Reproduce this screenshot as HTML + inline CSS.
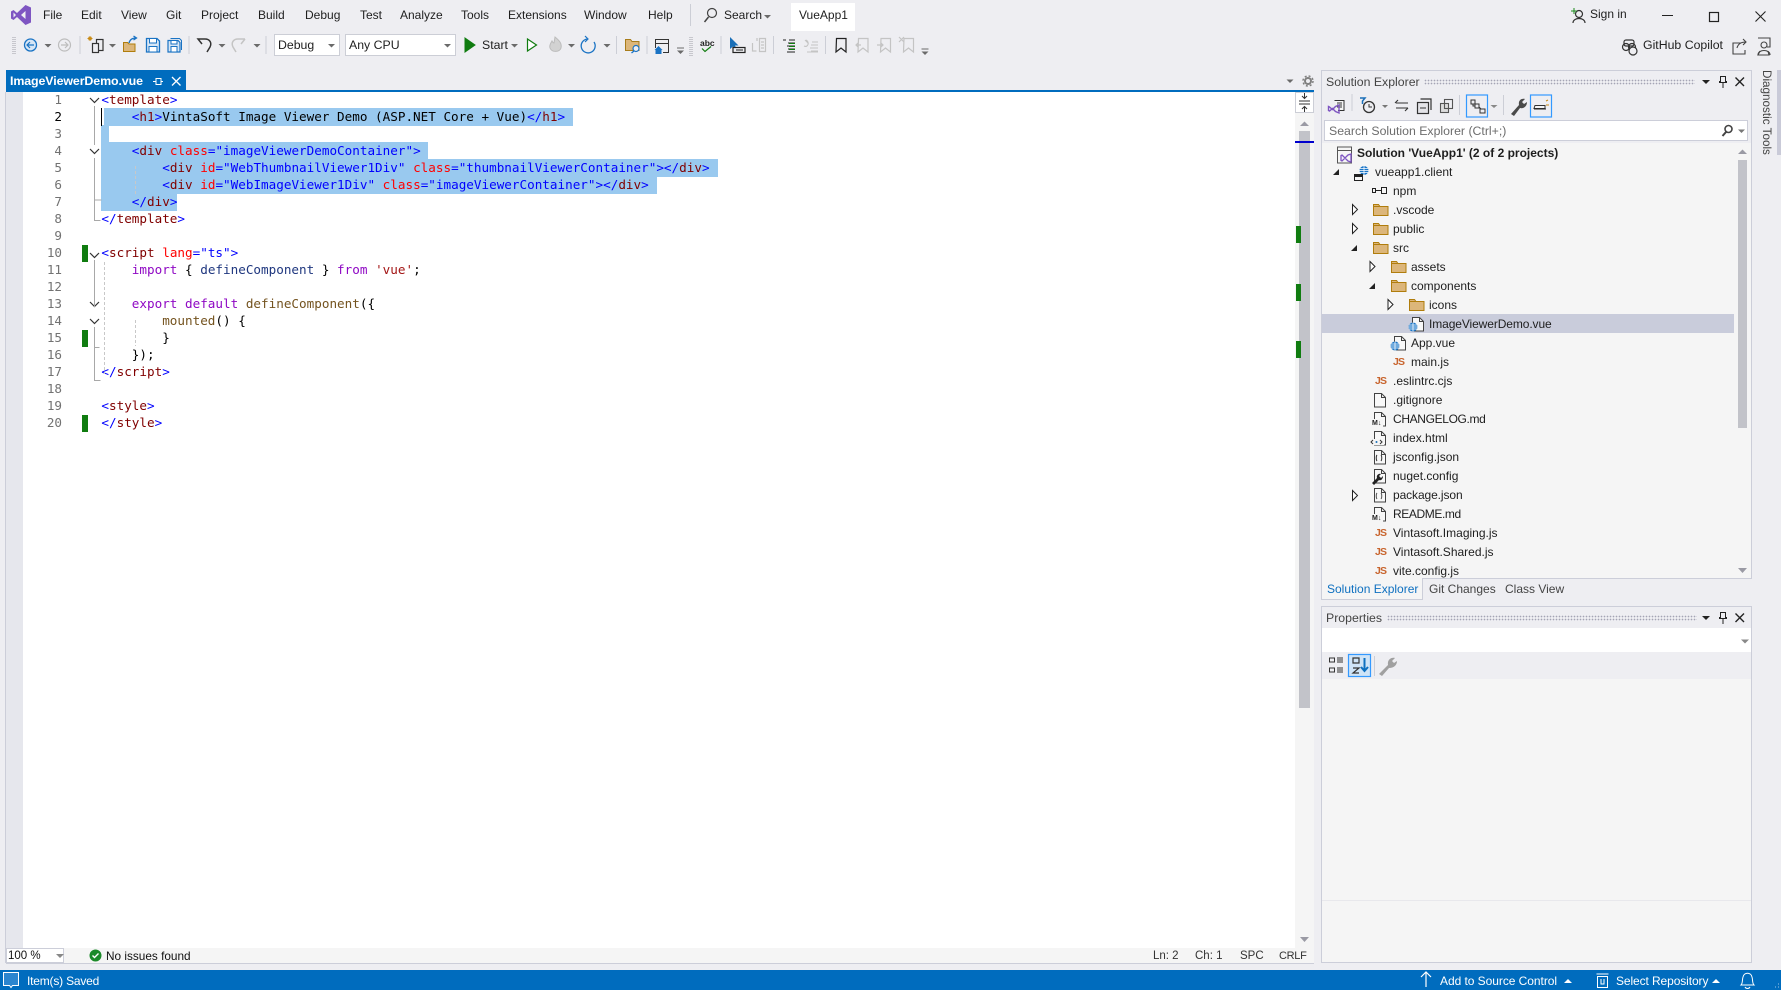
<!DOCTYPE html>
<html lang="en"><head><meta charset="utf-8"><title>VueApp1</title>
<style>
html,body{margin:0;padding:0;width:1781px;height:990px;overflow:hidden;background:#eeeef2}
body{position:relative;font-family:"Liberation Sans",sans-serif;font-size:12.3px;color:#1e1e1e}
.a{position:absolute}
.t{position:absolute;white-space:nowrap;line-height:16px}
.m{top:7px;font-size:12px}
.b{top:37px}
.r{position:absolute;white-space:nowrap;height:19px;line-height:19px;font-size:12px;color:#1e1e1e;margin-top:1px}
.c{position:absolute;left:101.4px;white-space:pre;height:17px;line-height:17px;font-family:"DejaVu Sans Mono","Liberation Mono",monospace;font-size:12.64px;color:#000;margin-top:-1px}
.n{position:absolute;width:30px;left:32px;text-align:right;height:17px;line-height:17px;font-family:"DejaVu Sans Mono","Liberation Mono",monospace;font-size:12.62px;color:#727272;margin-top:-1px}
.s{position:absolute;background:#99c9ef;height:18px}
.g{color:#0000ff}.h{color:#800000}.q{color:#ff0000}.p{color:#8f08c4}.v{color:#1f377f}.f{color:#74531f}.k{color:#a31515}
.dots{position:absolute;height:6px;background-image:radial-gradient(#a4a4b4 .7px,transparent .9px);background-size:3px 3px}
.js{position:absolute;font-size:10.5px;font-weight:bold;letter-spacing:-.8px;color:#c8642d;line-height:19px;height:19px;margin-top:1px}
.md{position:absolute;font-size:7px;font-weight:bold;color:#222;line-height:8px;z-index:2}
.st{position:absolute;color:#fff;white-space:nowrap;line-height:20px;top:971px;font-size:12px}
.bt{position:absolute;white-space:nowrap;top:949px;height:15px;line-height:15px;font-size:11.5px;color:#333}
</style></head><body>

<!-- panels -->
<div class="a" style="left:791px;top:3px;width:64px;height:28px;background:#fff"></div>
<div class="a" style="left:274px;top:34px;width:64px;height:20px;background:#fff;border:1px solid #ccced6"></div>
<div class="a" style="left:345px;top:34px;width:109px;height:20px;background:#fff;border:1px solid #ccced6"></div>

<!-- editor -->
<div class="a" style="left:6px;top:70px;width:180px;height:20px;background:#006cbe"></div>
<div class="a" style="left:6px;top:90px;width:1308px;height:2px;background:#006cbe"></div>
<div class="a" style="left:5px;top:92px;width:1309px;height:871px;background:#fff;border-left:1px solid #ccced9;box-sizing:border-box"></div>
<div class="a" style="left:6px;top:92px;width:17px;height:856px;background:#e6e7ed"></div>
<div class="a" style="left:1295px;top:92px;width:19px;height:856px;background:#f5f5f5"></div>
<div class="a" style="left:1295px;top:92px;width:19px;height:21px;background:#fff;border:1px solid #ccced6;box-sizing:border-box"></div>
<div class="a" style="left:1299px;top:131px;width:11px;height:577px;background:#c2c3c9"></div>
<div class="a" style="left:1296px;top:226px;width:5px;height:17px;background:#107c10"></div>
<div class="a" style="left:1296px;top:284px;width:5px;height:17px;background:#107c10"></div>
<div class="a" style="left:1296px;top:341px;width:5px;height:17px;background:#107c10"></div>
<div class="a" style="left:1295px;top:141px;width:19px;height:2px;background:#0000cd"></div>
<div class="a" style="left:6px;top:948px;width:1308px;height:15px;background:#f5f5f5;border-bottom:1px solid #ccced9"></div>
<div class="a" style="left:6px;top:948px;width:58px;height:15px;background:#fff;border:1px solid #ccced9;box-sizing:border-box"></div>

<!-- selection -->
<div class="s" style="left:104px;top:108px;width:469px"></div>
<div class="s" style="left:101px;top:125px;width:8px"></div>
<div class="s" style="left:101px;top:142px;width:327px"></div>
<div class="s" style="left:101px;top:159px;width:617px"></div>
<div class="s" style="left:101px;top:176px;width:556px"></div>
<div class="s" style="left:101px;top:193px;width:76px"></div>
<div class="a" style="left:101px;top:108px;width:1px;height:18px;background:#000"></div>

<!-- line numbers -->
<div class="n" style="top:91.5px">1</div><div class="n" style="top:108.5px;color:#000">2</div><div class="n" style="top:125.5px">3</div><div class="n" style="top:142.5px">4</div><div class="n" style="top:159.5px">5</div><div class="n" style="top:176.5px">6</div><div class="n" style="top:193.5px">7</div><div class="n" style="top:210.5px">8</div><div class="n" style="top:227.5px">9</div><div class="n" style="top:244.5px">10</div><div class="n" style="top:261.5px">11</div><div class="n" style="top:278.5px">12</div><div class="n" style="top:295.5px">13</div><div class="n" style="top:312.5px">14</div><div class="n" style="top:329.5px">15</div><div class="n" style="top:346.5px">16</div><div class="n" style="top:363.5px">17</div><div class="n" style="top:380.5px">18</div><div class="n" style="top:397.5px">19</div><div class="n" style="top:414.5px">20</div>

<!-- code -->
<div class="c" style="top:91.5px"><span class="g">&lt;</span><span class="h">template</span><span class="g">&gt;</span></div>
<div class="c" style="top:108.5px">    <span class="g">&lt;</span><span class="h">h1</span><span class="g">&gt;</span>VintaSoft Image Viewer Demo (ASP.NET Core + Vue)<span class="g">&lt;/</span><span class="h">h1</span><span class="g">&gt;</span></div>
<div class="c" style="top:142.5px">    <span class="g">&lt;</span><span class="h">div</span> <span class="q">class</span><span class="g">="imageViewerDemoContainer"&gt;</span></div>
<div class="c" style="top:159.5px">        <span class="g">&lt;</span><span class="h">div</span> <span class="q">id</span><span class="g">="WebThumbnailViewer1Div"</span> <span class="q">class</span><span class="g">="thumbnailViewerContainer"&gt;&lt;/</span><span class="h">div</span><span class="g">&gt;</span></div>
<div class="c" style="top:176.5px">        <span class="g">&lt;</span><span class="h">div</span> <span class="q">id</span><span class="g">="WebImageViewer1Div"</span> <span class="q">class</span><span class="g">="imageViewerContainer"&gt;&lt;/</span><span class="h">div</span><span class="g">&gt;</span></div>
<div class="c" style="top:193.5px">    <span class="g">&lt;/</span><span class="h">div</span><span class="g">&gt;</span></div>
<div class="c" style="top:210.5px"><span class="g">&lt;/</span><span class="h">template</span><span class="g">&gt;</span></div>
<div class="c" style="top:244.5px"><span class="g">&lt;</span><span class="h">script</span> <span class="q">lang</span><span class="g">="ts"&gt;</span></div>
<div class="c" style="top:261.5px">    <span class="p">import</span> { <span class="v">defineComponent</span> } <span class="p">from</span> <span class="k">'vue'</span>;</div>
<div class="c" style="top:295.5px">    <span class="p">export default</span> <span class="f">defineComponent</span>({</div>
<div class="c" style="top:312.5px">        <span class="f">mounted</span>() {</div>
<div class="c" style="top:329.5px">        }</div>
<div class="c" style="top:346.5px">    });</div>
<div class="c" style="top:363.5px"><span class="g">&lt;/</span><span class="h">script</span><span class="g">&gt;</span></div>
<div class="c" style="top:397.5px"><span class="g">&lt;</span><span class="h">style</span><span class="g">&gt;</span></div>
<div class="c" style="top:414.5px"><span class="g">&lt;/</span><span class="h">style</span><span class="g">&gt;</span></div>

<!-- solution explorer panel -->
<div class="a" style="left:1321px;top:70px;width:431px;height:509px;background:#f5f5f5;border:1px solid #ccced9;box-sizing:border-box"></div>
<div class="a" style="left:1322px;top:71px;width:429px;height:72px;background:#eeeef2"></div>
<div class="a" style="left:1324px;top:120px;width:424px;height:21px;background:#fff;border:1px solid #ccced9;box-sizing:border-box"></div>
<div class="a" style="left:1322px;top:314px;width:412px;height:19px;background:#c9ccdb"></div>
<div class="a" style="left:1738px;top:160px;width:9px;height:268px;background:#c2c3c9"></div>
<div class="dots" style="left:1424px;top:79px;width:271px"></div>
<div class="t" style="left:1326px;top:74px;color:#444">Solution Explorer</div>
<div class="t" style="left:1329px;top:123px;color:#6d6d6d">Search Solution Explorer (Ctrl+;)</div>

<!-- tabs -->
<div class="a" style="left:1321px;top:578px;width:102px;height:22px;background:#f5f5f5;border:1px solid #ccced9;border-top:none;box-sizing:border-box"></div>
<div class="t" style="left:1327px;top:581px;color:#0e70c0;font-size:12px">Solution Explorer</div>
<div class="t" style="left:1429px;top:581px;color:#444;font-size:12px">Git Changes</div>
<div class="t" style="left:1505px;top:581px;color:#444;font-size:12px">Class View</div>

<!-- properties -->
<div class="a" style="left:1321px;top:606px;width:431px;height:357px;background:#f5f5f5;border:1px solid #ccced9;box-sizing:border-box"></div>
<div class="a" style="left:1322px;top:607px;width:429px;height:21px;background:#eeeef2"></div>
<div class="a" style="left:1322px;top:628px;width:429px;height:24px;background:#fff"></div>
<div class="a" style="left:1322px;top:652px;width:429px;height:27px;background:#eeeef2"></div>
<div class="a" style="left:1322px;top:900px;width:429px;height:1px;background:#e8e8ec"></div>
<div class="dots" style="left:1387px;top:615px;width:310px"></div>
<div class="t" style="left:1326px;top:610px;color:#444">Properties</div>

<!-- status bar -->
<div class="a" style="left:0;top:970px;width:1781px;height:20px;background:#006cbe"></div>
<div class="st" style="left:27px;letter-spacing:-.2px">Item(s) Saved</div>
<div class="st" style="left:1440px;letter-spacing:-.05px">Add to Source Control</div>
<div class="st" style="left:1616px;letter-spacing:-.1px">Select Repository</div>

<!-- menu -->
<div class="t m" style="left:43px">File</div><div class="t m" style="left:81px">Edit</div><div class="t m" style="left:121px">View</div><div class="t m" style="left:166px">Git</div><div class="t m" style="left:201px">Project</div><div class="t m" style="left:258px">Build</div><div class="t m" style="left:305px">Debug</div><div class="t m" style="left:360px">Test</div><div class="t m" style="left:400px">Analyze</div><div class="t m" style="left:461px">Tools</div><div class="t m" style="left:508px">Extensions</div><div class="t m" style="left:584px">Window</div><div class="t m" style="left:648px">Help</div><div class="t m" style="left:724px">Search</div><div class="t m" style="left:799px">VueApp1</div><div class="t m" style="left:1590px;top:6px">Sign in</div>

<!-- toolbar text -->
<div class="t b" style="left:278px">Debug</div><div class="t b" style="left:349px">Any CPU</div><div class="t b" style="left:482px">Start</div><div class="t b" style="left:1643px">GitHub Copilot</div>

<div class="t" style="left:10px;top:73px;color:#fff;font-weight:bold;font-size:12.4px;letter-spacing:-.1px">ImageViewerDemo.vue</div>
<div class="bt" style="left:8px;color:#111">100 %</div>
<div class="bt" style="left:106px;color:#111;font-size:11.8px">No issues found</div>
<div class="bt" style="left:1153px">Ln: 2</div>
<div class="bt" style="left:1195px">Ch: 1</div>
<div class="bt" style="left:1240px">SPC</div>
<div class="bt" style="left:1279px;font-size:11px;letter-spacing:-.3px">CRLF</div>
<div class="t" style="left:1758px;top:70px;writing-mode:vertical-rl;color:#444;line-height:16px;font-size:11.7px">Diagnostic Tools</div>
<div class="a" style="left:1777px;top:70px;width:4px;height:85px;background:#c9cad8"></div>

<!-- tree text -->
<div class="r" style="top:143px;left:1357px;font-weight:bold">Solution 'VueApp1' (2 of 2 projects)</div>
<div class="r" style="top:162px;left:1375px">vueapp1.client</div>
<div class="r" style="top:181px;left:1393px">npm</div>
<div class="r" style="top:200px;left:1393px">.vscode</div>
<div class="r" style="top:219px;left:1393px">public</div>
<div class="r" style="top:238px;left:1393px">src</div>
<div class="r" style="top:257px;left:1411px">assets</div>
<div class="r" style="top:276px;left:1411px">components</div>
<div class="r" style="top:295px;left:1429px">icons</div>
<div class="r" style="top:314px;left:1429px;letter-spacing:-.1px">ImageViewerDemo.vue</div>
<div class="r" style="top:333px;left:1411px">App.vue</div>
<div class="r" style="top:352px;left:1411px">main.js</div>
<div class="r" style="top:371px;left:1393px">.eslintrc.cjs</div>
<div class="r" style="top:390px;left:1393px">.gitignore</div>
<div class="r" style="top:409px;left:1393px;letter-spacing:-.35px">CHANGELOG.md</div>
<div class="r" style="top:428px;left:1393px">index.html</div>
<div class="r" style="top:447px;left:1393px">jsconfig.json</div>
<div class="r" style="top:466px;left:1393px">nuget.config</div>
<div class="r" style="top:485px;left:1393px;letter-spacing:-.1px">package.json</div>
<div class="r" style="top:504px;left:1393px;letter-spacing:-.4px">README.md</div>
<div class="r" style="top:523px;left:1393px">Vintasoft.Imaging.js</div>
<div class="r" style="top:542px;left:1393px">Vintasoft.Shared.js</div>
<div class="r" style="top:561px;left:1393px">vite.config.js</div>
<div class="js" style="left:1393px;top:352px">JS</div>
<div class="js" style="left:1375px;top:371px">JS</div>
<div class="js" style="left:1375px;top:523px">JS</div>
<div class="js" style="left:1375px;top:542px">JS</div>
<div class="js" style="left:1375px;top:561px">JS</div>
<div class="md" style="left:1372px;top:420px">M↓</div>
<div class="md" style="left:1372px;top:515px">M↓</div>

<!-- icons -->
<svg class="a" style="left:0;top:0" width="1781" height="990" viewBox="0 0 1781 990" fill="none">
<defs>
<g id="car"><path d="M0 0h7l-3.500 3.500z" fill="#6a6a6a"/></g>
<g id="fold"><path d="M.5 2.500h5l1.500 2h8v9H.5z" fill="#dcb67a" stroke="#b07d0c"/><path d="M1 4.500h5.500" stroke="#b07d0c"/></g>
<g id="hol"><path d="M.5 0v10l5-5z" fill="#fff" stroke="#222"/></g>
<g id="sol"><path d="M6 0v6h-6z" fill="#222"/></g>
<g id="doc"><path d="M.5.500h7l4 4v9.500H.5z" fill="#f8f8f8" stroke="#424242"/><path d="M7.500.500v4h4" stroke="#424242"/></g>
<g id="globe"><circle cx="5" cy="5" r="4.500" fill="#1a76c8"/><path d="M.5 5h9M5 .5v9M1 3h8M1 7h8" stroke="#fff" stroke-width=".8"/></g>
<g id="chev"><path d="M0 0l4.500 4.500L9 0" stroke="#333" stroke-width="1.200"/></g>
</defs>

<!-- logo -->
<path fill-rule="evenodd" d="M25.500 5 31 7.500v15L25.500 25 17 17l-3.500 3L11 18.500v-7L13.500 10l3.500 3zm0 6-4.500 4 4.500 4zm-12 1.500v5L16 15z" fill="#7e55c2"/>
<path d="M690.500 4v22" stroke="#ccced6"/>
<circle cx="712" cy="13" r="4.500" stroke="#424242" stroke-width="1.200"/><path d="M708.500 17l-4 5" stroke="#424242" stroke-width="1.500"/>
<use href="#car" x="764" y="15"/>

<!-- window controls -->
<path d="M1662 15.500h11" stroke="#222"/><rect x="1709.500" y="12.500" width="9" height="9" stroke="#222" stroke-width="1.200"/><path d="M1755.500 11.500l10 10m0-10l-10 10" stroke="#222" stroke-width="1.100"/>
<circle cx="1579" cy="14" r="3.500" stroke="#333" stroke-width="1.200"/><path d="M1573 23c0-6 12-6 12 0" stroke="#333" stroke-width="1.200"/><path d="M1574 8v6M1571 11h6" stroke="#1c8a1c"/>

<!-- toolbar grip -->
<path d="M13 37v17M15 37v17" stroke="#a0a0a8" stroke-dasharray="1 1"/>
<path d="M690 41v19M692 41v19" stroke="#a0a0a8" stroke-dasharray="1 1" transform="translate(0,-4)"/>

<!-- nav -->
<circle cx="30.500" cy="45" r="6" stroke="#1a73c4" stroke-width="1.300" fill="#d7e6f5"/><path d="M34 45h-7m3-3-3 3 3 3" stroke="#1a73c4" stroke-width="1.200"/>
<use href="#car" x="44.500" y="44"/>
<circle cx="64.500" cy="45" r="6" stroke="#bdbdbd" stroke-width="1.200"/><path d="M61 45h7m-3-3 3 3-3 3" stroke="#bdbdbd" stroke-width="1.200"/>
<path d="M80 36v18" stroke="#ccced6"/>
<!-- new -->
<path d="M90 36v5M87.500 38.500h5M88.500 37l3 3m0-3-3 3" stroke="#c88a15"/>
<rect x="96.500" y="39.500" width="6.500" height="11" stroke="#333" stroke-width="1.200"/><rect x="92.500" y="43.500" width="6" height="9" stroke="#333" stroke-width="1.200" fill="#eeeef2"/>
<use href="#car" x="109" y="44"/>
<!-- open -->
<path d="M123.500 51.500v-9h4l1.500 1.500h6v7.500z" fill="#dcb67a" stroke="#b07d0c"/><path d="M129 43c1-4 4-5 7-5m-2.500-2 3 2-3 2" stroke="#1a73c4" stroke-width="1.300"/>
<!-- save -->
<path d="M146.500 38.500h10.500l2.500 2.500v11h-13z" fill="#d7e6f5" stroke="#1a73c4" stroke-width="1.300"/><rect x="149.500" y="38.500" width="7" height="4.500" fill="#fff" stroke="#1a73c4"/><rect x="149" y="46.500" width="8" height="5.500" fill="#fff" stroke="#1a73c4"/>
<path d="M170.500 38.500h9l2 2v9.500" stroke="#1a73c4"/><path d="M168 40.500h10l2 2v9.500h-12z" fill="#d7e6f5" stroke="#1a73c4" stroke-width="1.200"/><rect x="171" y="46.500" width="6" height="5.500" fill="#fff" stroke="#1a73c4"/><rect x="171" y="40.500" width="6" height="3.500" fill="#fff" stroke="#1a73c4"/>
<path d="M189 36v18" stroke="#ccced6"/>
<!-- undo -->
<path d="M199 39l-1 0 4 5m-4-5h7c5 0 7 4 5 8l-3 5" stroke="#333" stroke-width="1.500"/>
<use href="#car" x="218.500" y="44"/>
<path d="M245 39l-4 5m4-5h-7c-5 0-7 4-5 8l3 5" stroke="#c4c4c4" stroke-width="1.500"/>
<use href="#car" x="253.500" y="44"/>
<path d="M266 36v18" stroke="#ccced6"/>
<use href="#car" x="328" y="44"/><use href="#car" x="444" y="44"/>
<!-- start -->
<path d="M465 38l10 7-10 7z" fill="#107c10" stroke="#107c10"/>
<use href="#car" x="511" y="44"/>
<path d="M527.500 39l9 6-9 6z" stroke="#107c10" stroke-width="1.200" fill="#fff"/>
<path d="M555 37c5 4 7 7 6 11-1 4-9 5-11 0-1-3 1-5 2-7 1 2 2 2 2 2z" fill="#d2d2d2" stroke="#bcbcbc"/>
<use href="#car" x="568" y="44"/>
<path d="M587 39a7 7 0 1 0 7 3" stroke="#1a73c4" stroke-width="1.300"/><path d="M585 36l3 3-3 3" stroke="#1a73c4" stroke-width="1.200"/>
<use href="#car" x="603.500" y="44"/>
<path d="M616.500 36v18M647 36v18M721 36v18M773.500 36v18M825.500 36v18" stroke="#ccced6"/>
<!-- folder search -->
<path d="M625.500 50.500v-11h5l1.500 2h7v9z" fill="#dcb67a" stroke="#a87c1b"/><circle cx="636" cy="48.500" r="3" fill="#eeeef2" stroke="#1a73c4" stroke-width="1.200"/><path d="M634 51l-2.500 2" stroke="#1a73c4" stroke-width="1.300"/>
<!-- home window -->
<rect x="655.500" y="39.500" width="13" height="13" stroke="#333" fill="none"/><path d="M655.500 43.500h13" stroke="#333"/><rect x="654" y="48" width="9" height="6" fill="#eeeef2"/><path d="M654.500 50l4-4 4 4h-1v4h-6v-4z" fill="#1a73c4"/>
<path d="M677 48h7" stroke="#6a6a6a"/><path d="M677 50.500h7l-3.500 3.500z" fill="#6a6a6a"/>
<!-- abc -->
<path d="M702 48.500l3 3 6-5" stroke="#107c10" stroke-width="1.200"/>
<text x="700" y="46" font-family="Liberation Sans" font-size="8.500" font-weight="bold" fill="#222">abc</text>
<!-- cursor -->
<path d="M730 37v12l3-2.500 2 3.500 1.500-1-1.500-3.500h3.500z" fill="#1a6fb8"/><rect x="733" y="47.500" width="12" height="5" stroke="#222" stroke-width="1.200" fill="#eeeef2"/><path d="M736 50h7" stroke="#222"/>
<path d="M752.500 43v8h4M759.500 38.500h6v13h-6zM757 38v3M761 42h3M761 45h3M761 48h3" stroke="#c4c4c4" stroke-width="1.200"/>
<path d="M783 40h3M789 40h6M788 43h7M787 46h8M788 49h7M787 52h8" stroke="#222"/><path d="M789 43.500h6M789 46.500h6M789 49.500h6" stroke="#107c10"/>
<path d="M805 40l3 3M812 42h6M811 45h7M810 48h8M811 51h7M807 52h11M804 46c4 2 6-4 2-6" stroke="#c4c4c4" stroke-width="1.100"/>
<!-- bookmarks -->
<path d="M836.500 38.500h9.500v13.500l-5-4-5 4z" stroke="#222" stroke-width="1.200"/>
<path d="M858.500 38.500h9.500v13.500l-5-4-5 4zM861 45h-5m2-2-2 2 2 2" stroke="#c4c4c4" stroke-width="1.200"/>
<path d="M881 38.500h9.500v13.500l-5-4-5 4zM877 45h6m-2-2 2 2-2 2" stroke="#c4c4c4" stroke-width="1.200"/>
<path d="M904 38.500h9.500v13.500l-5-4-5 4zM899 37l5 5m0-5-5 5" stroke="#c4c4c4" stroke-width="1.200"/>
<path d="M921.500 49h7" stroke="#6a6a6a"/><path d="M921.500 51.500h7l-3.500 3.500z" fill="#6a6a6a"/>

<!-- copilot etc -->
<circle cx="1626" cy="47" r="3.500" stroke="#333" stroke-width="1.200"/><circle cx="1632" cy="47" r="3.500" stroke="#333" stroke-width="1.200"/><rect x="1624" y="40" width="10" height="6" rx="2" stroke="#333" stroke-width="1.200"/><circle cx="1633" cy="51" r="4" fill="#eeeef2" stroke="#333" stroke-width="1.200"/>
<path d="M1741 43h-8v11h12v-4M1737 48c1-4 4-6 9-6m-3-3 3 3-3 3" stroke="#444" stroke-width="1.100"/>
<path d="M1760 51l-2 4h11l-1-4M1758 38h12v9h-3" stroke="#444" stroke-width="1.100"/><circle cx="1764" cy="45" r="3" stroke="#444" stroke-width="1.100" fill="#eeeef2"/><path d="M1758 55c0-6 12-6 12 0" stroke="#444" stroke-width="1.100"/>

<!-- tab icons -->
<path d="M153 81.500h3m0-3v6h5v-6zM161 81.500h2" stroke="#fff"/>
<path d="M172 77l8.500 8.500m0-8.500-8.500 8.500" stroke="#fff" stroke-width="1.300"/>
<use href="#car" x="1286.500" y="79.500"/>
<circle cx="1308" cy="81" r="3" stroke="#808080" stroke-width="2"/><circle cx="1308" cy="81" r="5" stroke="#808080" stroke-dasharray="2 2" stroke-width="1.500"/>

<!-- splitter -->
<path d="M1299 101h11M1299 104h11M1304.500 93v5M1304.500 107v5M1302 96l2.500 2.500 2.500-2.500M1302 109l2.500-2.500 2.500 2.500" stroke="#333"/>
<path d="M1300 126l4.500-4.500 4.500 4.500z" fill="#9a9aa4"/><path d="M1300 937h9l-4.500 5z" fill="#9a9aa4"/>

<!-- editor margin -->
<use href="#chev" x="90" y="98"/><use href="#chev" x="90" y="149"/><use href="#chev" x="90" y="253"/><use href="#chev" x="90" y="302"/><use href="#chev" x="90" y="319"/>
<path d="M94.500 106v39M94.500 158v62.500h6M94.500 260v47M94.500 327v53.500h6M94.500 327v20.500h5M94.500 200h7" stroke="#a8a8a8"/>
<path d="M104.500 262v112M135.500 320v26M135.500 166v28" stroke="#c8c8c8" stroke-dasharray="3 2"/>
<rect x="82" y="245" width="6" height="17" fill="#107c10"/><rect x="82" y="330" width="6" height="17" fill="#107c10"/><rect x="82" y="415" width="6" height="17" fill="#107c10"/>

<!-- bottom bar -->
<path d="M56 954h8l-4 4z" fill="#888"/>
<circle cx="95.500" cy="955.500" r="6" fill="#1b8a2a"/><path d="M92.500 955.500l2 2 4-4" stroke="#fff" stroke-width="1.400"/>

<!-- SE title -->
<path d="M1702 80h8l-4 4z" fill="#222"/><path d="M1720.500 76.500h5v5h1v1h-7v-1h1zM1723 83v5" stroke="#222"/><path d="M1735.500 77.500l8.500 8.500m0-8.500-8.500 8.500" stroke="#222" stroke-width="1.400"/>
<path d="M1702 616h8l-4 4z" fill="#222"/><path d="M1720.500 612.500h5v5h1v1h-7v-1h1zM1723 619v5" stroke="#222"/><path d="M1735.500 613.500l8.500 8.500m0-8.500-8.500 8.500" stroke="#222" stroke-width="1.400"/>

<!-- SE toolbar -->
<path d="M1334.500 100.500h9.500v10h-6" stroke="#333" fill="#f5f5f5"/><path d="M1337 103h5M1337 105h5M1337 107h5" stroke="#333"/>
<path d="M1329.500 107l3 2.500 3-3 3.500-1.500v8l-3.500-1.500-3-3-3 2.500-1-.5v-4z" stroke="#7e55c2" stroke-width="1.400" fill="none"/>
<path d="M1352 94v17" stroke="#ccced6"/>
<circle cx="1369" cy="107" r="5.500" stroke="#333" stroke-width="1.300"/><path d="M1369 104v3h3" stroke="#333"/><path d="M1360 98h5l-2.500 3v3" stroke="#1a6fb8" stroke-width="1.500"/>
<path d="M1382 105h6l-3 3z" fill="#777"/>
<path d="M1396 103h12M1408 108h-12" stroke="#333" stroke-width="1.100"/><path d="M1398 100l-3 3M1405 111l3-3" stroke="#333" stroke-width="1.100"/>
<rect x="1417.500" y="102.500" width="11" height="11" fill="#e4e4e8" stroke="#333" stroke-width="1.200"/><path d="M1420.500 99h10.500v11" stroke="#333" stroke-width="1.200"/><path d="M1420 108h6" stroke="#333"/>
<rect x="1440.500" y="103.500" width="8" height="9" fill="#ddd" stroke="#555" stroke-width="1.100"/><rect x="1444.500" y="99.500" width="8" height="9" stroke="#555" stroke-width="1.100"/>
<path d="M1459.500 95v20" stroke="#ccced6"/>
<rect x="1466.500" y="95" width="21" height="22" stroke="#3399ff" stroke-width="1.200"/>
<rect x="1471" y="100" width="4" height="4" stroke="#333"/><rect x="1475" y="104" width="4" height="4" stroke="#333"/><rect x="1480" y="109" width="5" height="4" stroke="#333"/><path d="M1473 104v2h2M1479 107l2 2" stroke="#333"/>
<path d="M1490.500 105h7l-3.500 3z" fill="#888"/>
<path d="M1503.500 95v20" stroke="#ccced6"/>
<path d="M1511 114l8-9c-1-5 3-7 6-6l-3 3 2 2 3-2c0 4-3 7-7 6l-6 8z" fill="#4a4a4a"/>
<rect x="1530.500" y="95" width="21" height="22" stroke="#3399ff" stroke-width="1.200"/>
<path d="M1534 108.500h11v-3h-10z" stroke="#333" fill="#f5f5f5"/><path d="M1534 109h12" stroke="#222"/><path d="M1546 101l2-1M1546 105h3" stroke="#c88a15"/>
<circle cx="1728.500" cy="129" r="3.500" stroke="#444" stroke-width="1.600"/><path d="M1726 132l-3.500 4" stroke="#444" stroke-width="2"/>
<path d="M1738 129.500h7l-3.500 3.500z" fill="#777"/>

<!-- SE scroll arrows -->
<path d="M1738 154l4.500-4.500 4.500 4.500z" fill="#9a9aa4"/><path d="M1738 568h9l-4.500 5z" fill="#9a9aa4"/>

<!-- Tree: solution -->
<path d="M1337.500 147h14v16h-14z" stroke="#555" fill="#f5f5f5"/><path d="M1337.500 150.500h14" stroke="#555"/><path d="M1342 155l3 3 3-3 3-1v8l-3-1-3-3-3 3-1-.5v-5z" stroke="#7e55c2" stroke-width="1.300" fill="#f5f5f5"/>
<use href="#sol" x="1333" y="169"/>
<use href="#globe" x="1359" y="165.500"/><rect x="1354.500" y="174.500" width="8" height="6" stroke="#222" fill="#f5f5f5"/><path d="M1355 176h7" stroke="#222" stroke-width="2"/>
<!-- npm -->
<rect x="1372.500" y="188.500" width="3" height="4" stroke="#222"/><rect x="1381.500" y="187.500" width="5" height="6" stroke="#222"/><path d="M1376 190.500h5" stroke="#222"/>
<use href="#hol" x="1352" y="204.500"/><use href="#fold" x="1373" y="202"/>
<use href="#hol" x="1352" y="223.500"/><use href="#fold" x="1373" y="221"/>
<use href="#sol" x="1351" y="245"/><use href="#fold" x="1373" y="240"/>
<use href="#hol" x="1369.500" y="261.500"/><use href="#fold" x="1391" y="259"/>
<use href="#sol" x="1369" y="283"/><use href="#fold" x="1391" y="278"/>
<use href="#hol" x="1387.500" y="299.500"/><use href="#fold" x="1409" y="297"/>
<use href="#doc" x="1412" y="317"/><use href="#globe" x="1408" y="322"/>
<use href="#doc" x="1394" y="336"/><use href="#globe" x="1390" y="341"/>
<use href="#doc" x="1374" y="393"/>
<use href="#doc" x="1374" y="412"/>
<use href="#doc" x="1374" y="431"/>
<use href="#doc" x="1374" y="450"/>
<use href="#doc" x="1374" y="469"/>
<use href="#doc" x="1374" y="488"/>
<use href="#doc" x="1374" y="507"/>
<rect x="1371" y="419" width="12" height="8" fill="#f5f5f5"/><rect x="1371" y="514" width="12" height="8" fill="#f5f5f5"/>
<rect x="1370" y="439" width="14" height="6" fill="#f5f5f5"/>
<path d="M1373 440l-2 2 2 2m7-4 2 2-2 2" stroke="#333"/><circle cx="1376.500" cy="442" r="1" fill="#1a6fb8"/>
<path d="M1377 455c-1 1-1 5 0 6m4-6c1 1 1 5 0 6" stroke="#333"/>
<path d="M1372 483l5-5c-1-3 2-5 4-4l-2 2 2 2 2-2c0 3-2 5-4 4l-5 5z" fill="#222"/>
<use href="#hol" x="1352" y="490.500"/>
<path d="M1377 493c-1 1-1 5 0 6m4-6c1 1 1 5 0 6" stroke="#555"/>

<!-- properties toolbar -->
<path d="M1329.500 658h5v4h-5zM1329.500 668h5v4h-5zM1337 658h6M1337 660h6M1337 662h6M1337 668h6M1337 670h6M1337 672h6" stroke="#333"/>
<rect x="1348.500" y="654.500" width="22" height="22" stroke="#3399ff" stroke-width="1.200" fill="#cfe4f7"/>
<path d="M1353 658h6v5h-6zM1353 668h6l-6 5h6" stroke="#333" stroke-width="1.200"/><path d="M1364.500 658v12M1361 667l3.500 4 3.500-4" stroke="#0e70c0" stroke-width="2"/>
<path d="M1374.500 656v20" stroke="#ccced6"/>
<path d="M1379 674l9-9c-1-6 4-8 7-7l-3 3 2 2 3-2c0 4-3 7-8 7l-7 8z" fill="#a0a0a0"/>
<path d="M1741 639.500h8l-4 4z" fill="#888"/>

<!-- status icons -->
<path d="M3.500 972.500h15v13h-6l-1.500 2-1.500-2h-6z" stroke="#fff" fill="#2b85cf"/>
<path d="M1426 987v-15m-5 5 5-5 5 5" stroke="#fff" stroke-width="1.200"/>
<path d="M1564 983l4-4 4 4z" fill="#fff"/>
<path d="M1596.500 974h12M1597.500 976.500h10v11h-10zM1601 979v5h3v-5" stroke="#fff"/>
<path d="M1712 983l4-4 4 4z" fill="#fff"/>
<path d="M1741 985c2-2 1-5 2-8 1-5 8-5 9 0 1 3 0 6 2 8zM1745 987c1 2 4 2 5 0" stroke="#fff"/>
<path d="M1778 984h1M1775 987h1M1778 987h1" stroke="#9bc3e6"/>
</svg>

</body></html>
